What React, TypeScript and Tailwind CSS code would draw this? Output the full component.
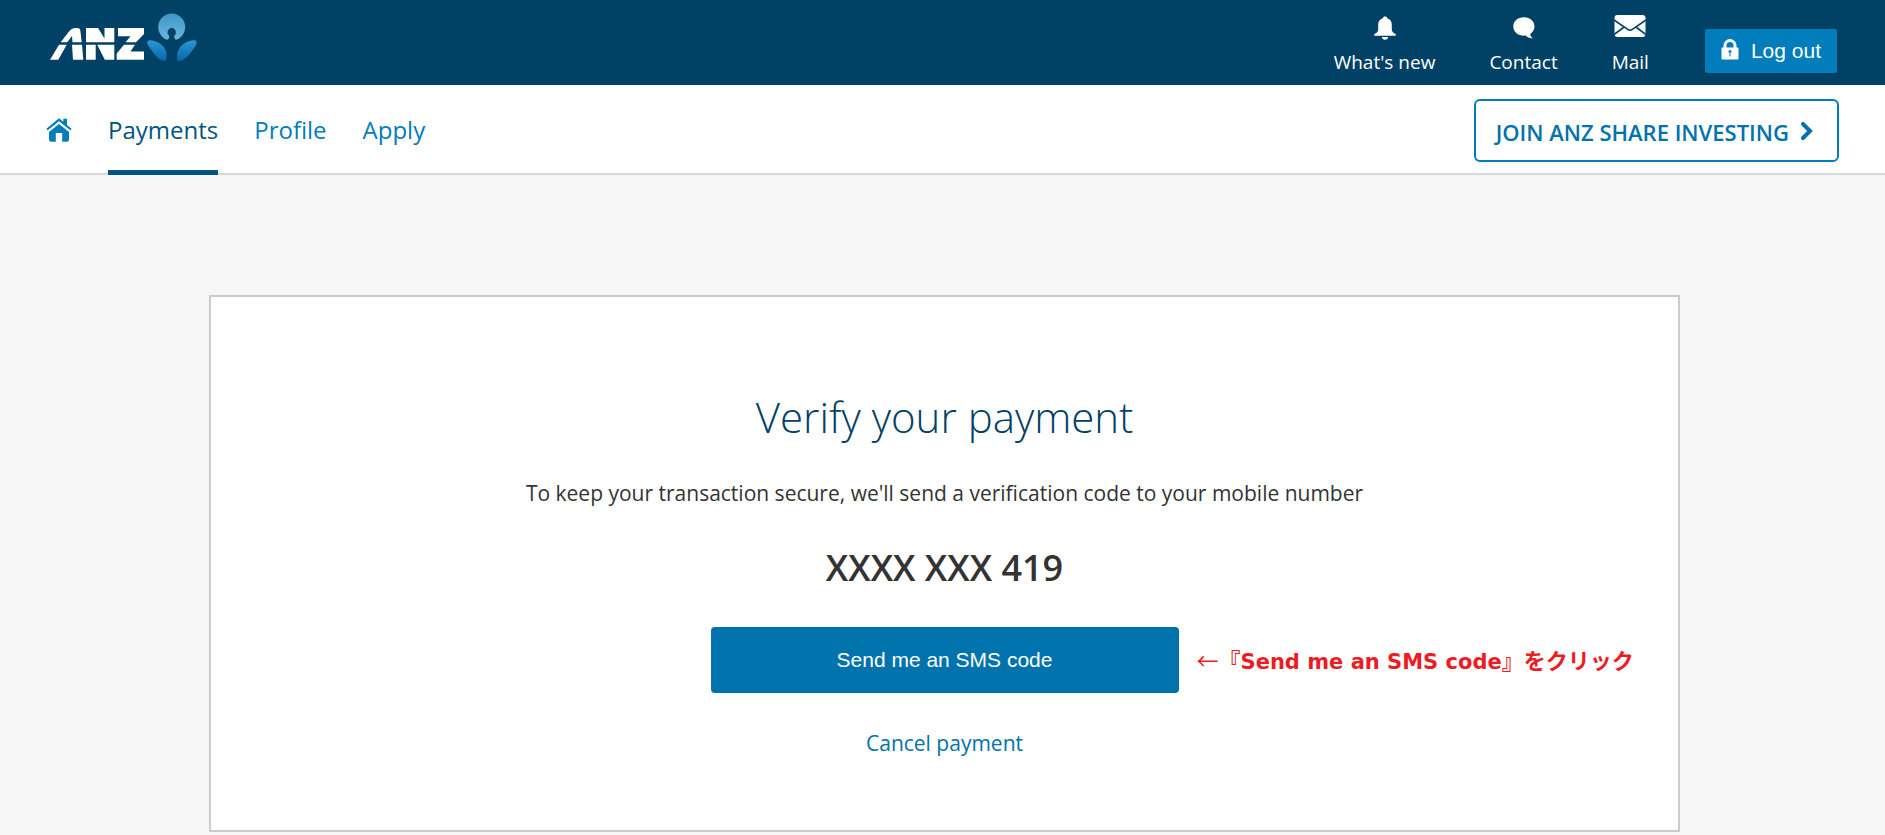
import type { ReactNode } from 'react';

const sans = "font-['Open_Sans','Noto_Sans',sans-serif]";

function Logo() {
  return (
    <svg viewBox="0 0 156 66" className="h-[66px] w-[156px]" role="img" aria-label="ANZ">
      <defs>
        <linearGradient id="petalTop" x1="0" y1="0" x2="0" y2="1">
          <stop offset="0" stopColor="#3f97c8" />
          <stop offset="1" stopColor="#68b6e0" />
        </linearGradient>
        <linearGradient id="petalSide" x1="0" y1="0" x2="0" y2="1">
          <stop offset="0" stopColor="#2a97d4" />
          <stop offset="1" stopColor="#0868ac" />
        </linearGradient>
      </defs>
      <g fill="#ffffff">
        <path d="M16.700 42.300 25 31.500Q27.500 28 31.500 28H33.500Q36 28 36.400 31L37.700 42.300H28.500L28 36 23.300 42.300Z" />
        <path d="M15 44.700H22.700L14.300 59.800H6ZM28 44.700H38L39.300 59.800H29Z" />
        <path d="M42 28H54L60.500 38.500V28H70.300V42.300H42Z" />
        <path d="M42 44.700H51.700V59.800H42ZM53.200 44.700H70.300V59.800H60.800Z" />
        <path d="M74 28H100V34L92 42.300H81.500L86.500 36.200H74Z" />
        <path d="M80 44.700H91L86.500 51.500H100V59.800H72.700V53.500Z" />
      </g>
      <path fill="url(#petalTop)" d="M123.200 39.800A13.500 13.500 0 1 1 132.200 39.800Q130.300 39.500 130.300 37V35.600A4.200 4.200 0 1 0 125.100 35.600V37Q125.100 39.500 123.200 39.800Z" />
      <path fill="url(#petalSide)" d="M103.200 41.500C104.500 39.500 110 40 115 43C121.500 47 124 53 122 60.500C116.500 62 112.500 57 108.500 51.500C106 48 102.500 44.500 103.200 41.500Z" />
      <path fill="url(#petalSide)" d="M152.500 41.500C151.500 39.500 146 40 141 43C134.500 47 132 53 133.500 60.500C139 62 143.500 57 147.500 51.500C150 48 153.300 44.500 152.500 41.500Z" />
    </svg>
  );
}

function HeaderLink({ icon, label }: { icon: ReactNode; label: string }) {
  return (
    <a href="#" className="flex flex-col items-center gap-1.5 text-[19px] leading-6 text-white">
      <span className="flex h-8 items-center">{icon}</span>
      {label}
    </a>
  );
}

export default function App() {
  return (
    <div className={`min-h-screen bg-[#f6f6f6] ${sans}`}>
      <header className="flex h-[85px] items-start justify-between bg-[#004165] pr-12 pl-11">
        <a href="#">
          <Logo />
        </a>
        <div className="flex items-start pt-3">
          <nav className="flex gap-[54px] pr-14">
            <HeaderLink
              label="What's new"
              icon={
                <svg viewBox="0 0 22 24" className="h-6 w-[22px]" fill="#fff">
                  <path d="M11 0.500C12.300 0.500 13 1.200 13.200 2.200C16.300 3 17.800 5.500 17.800 8.500V13.500C17.800 16 19.500 17 21.300 17.800C22.200 18.300 22 19.800 21 19.800H1C0 19.800-.2 18.300.7 17.800C2.500 17 4.200 16 4.200 13.500V8.500C4.200 5.500 5.700 3 8.800 2.200C9 1.200 9.700.5 11 .5ZM8 21H14C14 22.800 12.800 23.800 11 23.800S8 22.800 8 21Z" />
                </svg>
              }
            />
            <HeaderLink
              label="Contact"
              icon={
                <svg viewBox="0 0 22 22" className="h-[22px] w-[22px]" fill="#fff">
                  <path d="M10.800 0.300C17 .3 21.500 4.200 21.500 9.500C21.500 12.700 19.800 15.300 17.200 16.900C17.300 18.800 18.300 20.300 20 21.200C17 21.500 14.300 20.500 12.500 18.600C6 19.300.3 15.500.3 9.500C.3 4.200 4.700.3 10.800.3Z" />
                </svg>
              }
            />
            <HeaderLink
              label="Mail"
              icon={
                <svg viewBox="0 0 32 26" className="h-[26px] w-8">
                  <rect x="0.500" width="31" height="22" rx="3" fill="#fff" />
                  <path d="M0 5 12.500 13.500Q16 17 19.500 13.500L32 5M0 19.500 9.500 12.500M32 19.500 22.500 12.500" fill="none" stroke="#004165" strokeWidth="1.600" />
                </svg>
              }
            />
          </nav>
          <button
            type="button"
            className="mt-[17px] flex h-11 items-center gap-3 rounded-xs bg-[#007dba] px-4 font-['Liberation_Sans',Arial,sans-serif] text-[21px] text-white"
          >
            <svg viewBox="0 0 18 21" className="mb-1 h-[21px] w-[18px]">
              <path d="M4 10V6.500A5 5 0 0 1 14 6.500V10" fill="none" stroke="#fff" strokeWidth="3" />
              <rect x="0.500" y="8.500" width="17" height="12" rx="1" fill="#fff" />
              <path d="M7.500 12.500A1.500 1.500 0 0 1 10.500 12.500V13.500H9.500V17.500H8.500V13.500H7.500Z" fill="#007dba" />
            </svg>
            Log out
          </button>
        </div>
      </header>

      <div className="flex h-[90px] items-stretch justify-between border-b-2 border-[#d9d9d9] bg-white px-[46px]">
        <nav className="flex gap-9 text-2xl text-[#007dba]">
          <a href="#" aria-label="Home" className="flex items-center pt-0.5">
            <svg viewBox="0 0 26 24" className="h-6 w-[26px]" fill="#007dba">
              <path d="M13 0.300 17.300 3.800V.8H21V7L25.600 10.800 24.300 12.300 13 3.300 1.700 12.300.4 10.800Z" />
              <path d="M13 6 23 14V21.500Q23 23.700 20.800 23.700H16.200V15H9.800V23.700H5.200Q3 23.700 3 21.500V14Z" />
            </svg>
          </a>
          <a href="#" aria-current="page" className="-mb-0.5 flex items-center border-b-5 border-[#005580] pt-[5px] text-[#005580]">
            Payments
          </a>
          <a href="#" className="flex items-center pt-0.5">Profile</a>
          <a href="#" className="flex items-center pt-0.5">Apply</a>
        </nav>
        <button
          type="button"
          className="mt-[14px] flex h-[63px] items-center gap-3 rounded-md border-2 border-[#007dba] pr-6 pl-5 text-[22px] font-semibold text-[#0072ac]"
        >
          <span className="pt-[3px]">JOIN ANZ SHARE INVESTING</span>
          <svg viewBox="0 0 12 18" className="h-[18px] w-3" fill="none" stroke="#0072ac" strokeWidth="4">
            <path d="M2 2 9 9 2 16" strokeLinecap="round" strokeLinejoin="miter" />
          </svg>
        </button>
      </div>

      <main className="pt-[120px] pr-[205px] pl-[209px]">
        <section className="flex flex-col items-center border-2 border-[#cccccc] bg-white pt-23 pb-[71px] text-[#333333]">
          <h1 className="text-[42px] leading-[56px] font-light text-[#004165]">Verify your payment</h1>
          <p className="mt-8 text-[21px] leading-8">
            To keep your transaction secure, we'll send a verification code to your mobile number
          </p>
          <p className="mt-[34px] text-4xl leading-[50px] font-semibold">XXXX XXX 419</p>
          <div className="mt-[34px] grid w-full grid-cols-[1fr_468px_1fr] items-center">
            <button
              type="button"
              className="col-start-2 h-[66px] rounded bg-[#0072ac] font-['Liberation_Sans',Arial,sans-serif] text-[21px] text-white"
            >
              Send me an SMS code
            </button>
            <p className="pl-[18px] font-['Noto_Sans_CJK_JP',sans-serif] text-[22px] leading-8 font-bold whitespace-nowrap text-[#ed1c24]">
              <span className="font-normal">←</span>
              『<span className="font-['DejaVu_Sans',sans-serif] text-[21px]">Send me an SMS code</span>』をクリック
            </p>
          </div>
          <a href="#" className="mt-[34px] text-[21px] leading-8 text-[#0072ac]">
            Cancel payment
          </a>
        </section>
      </main>
    </div>
  );
}
